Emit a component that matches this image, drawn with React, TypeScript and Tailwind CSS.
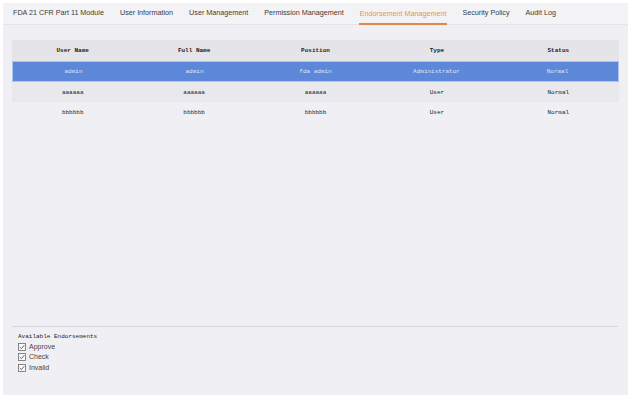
import React from "react";

const tabs = [
  "FDA 21 CFR Part 11 Module",
  "User Information",
  "User Management",
  "Permission Management",
  "Endorsement Management",
  "Security Policy",
  "Audit Log",
];

const rows = [
  { cells: ["admin", "admin", "fda admin", "Administrator", "Normal"], kind: "sel" },
  { cells: ["aaaaaa", "aaaaaa", "aaaaaa", "User", "Normal"], kind: "alt" },
  { cells: ["bbbbbb", "bbbbbb", "bbbbbb", "User", "Normal"], kind: "plain" },
];

function Check() {
  return (
    <svg width="8" height="8" viewBox="0 0 8 8" className="shrink-0">
      <rect x="0.5" y="0.5" width="7" height="7" fill="#fafafa" stroke="#6b6b6b" strokeWidth="0.8" />
      <path d="M1.8 4.1 L3.4 5.6 L6.3 2.2" fill="none" stroke="#555" strokeWidth="0.9" />
    </svg>
  );
}

export default function App() {
  return (
    <div className="w-[634px] h-[401px] bg-white pt-[3px] pl-[3px]">
      <div className="w-[625px] h-[392px] bg-[#f0f0f4] flex flex-col">
        <div className="h-[22px] bg-[#f3f3f6] border-b border-[#e4e4ea] flex items-stretch pl-[9px] gap-[14px] text-[7.2px] text-[#3a3a3a]" style={{ fontFamily: "'Liberation Sans', Arial, sans-serif" }}>
          {tabs.map((t, i) => (
            <div key={t} className={`flex items-center px-[1px] ${i === 4 ? "text-[#e6915c] border-b-2 border-[#e5844a] mb-[-1px]" : "border-b-2 border-transparent"}`}>
              <span className="pt-[2px]">{t}</span>
            </div>
          ))}
        </div>
        <div className="px-[9px] pt-[15px] flex-1 flex flex-col" style={{ fontFamily: "'Liberation Mono', 'DejaVu Sans Mono', monospace" }}>
          <div className="grid grid-cols-5 h-[21px] bg-[#e5e5e9] items-center text-center text-[6px] font-bold text-[#222]">
            <div>User Name</div>
            <div>Full Name</div>
            <div>Position</div>
            <div>Type</div>
            <div>Status</div>
          </div>
          {rows.map((r, i) => (
            <div
              key={i}
              className={`grid grid-cols-5 items-center text-center text-[6px] ${
                r.kind === "sel"
                  ? "h-[21px] bg-[#5d88d9] text-[#dce6f7] border border-[#a9c6ef]"
                  : r.kind === "alt"
                  ? "h-[20px] bg-[#e9e9ed] text-[#222]"
                  : "h-[21px] text-[#222]"
              }`}
            >
              {r.cells.map((c, j) => (
                <div key={j}>{c}</div>
              ))}
            </div>
          ))}
          <div className="flex-1" />
          <div className="border-t border-[#d7d7dd] mr-[1px] pt-[5px] pb-[22px] pl-[6px]">
            <div className="text-[6px] text-[#222] h-[10px] flex items-center">Available Endorsements</div>
            {["Approve", "Check", "Invalid"].map((l) => (
              <div key={l} className="h-[10.5px] flex items-center gap-[3px] text-[7px] text-[#444]" style={{ fontFamily: "'Liberation Sans', Arial, sans-serif" }}>
                <Check />
                <span>{l}</span>
              </div>
            ))}
          </div>
        </div>
      </div>
    </div>
  );
}
